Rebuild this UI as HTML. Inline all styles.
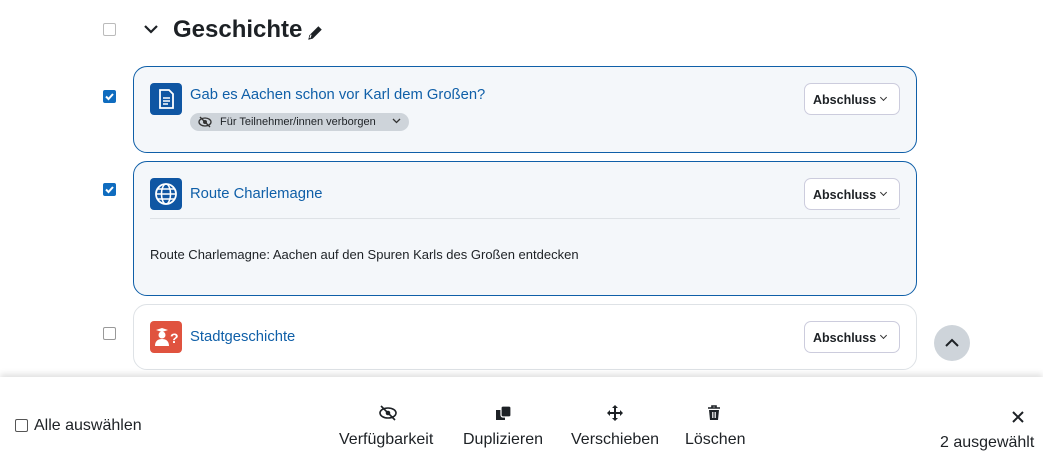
<!DOCTYPE html>
<html><head><meta charset="utf-8"><style>
*{box-sizing:border-box;margin:0;padding:0}
body{width:1043px;height:466px;overflow:hidden;background:#fff;font-family:"Liberation Sans",sans-serif;color:#1d2125;position:relative}
.a{position:absolute}
.cb{position:absolute;left:103px;width:13px;height:13px;border:1px solid #aaa;border-radius:2px;background:#fff}
.cb.on{background:#0f6cbf;border-color:#0f6cbf}
.card{position:absolute;left:133px;width:784px;border:1px solid #0f5fa8;border-radius:14px;background:#f4f7fa}
.ic{position:absolute;left:16px;width:32px;height:32px;border-radius:4px;background:#0f56a3}
.t{position:absolute;left:56px;font-size:14.8px;color:#0f5fa8}
.btn{position:absolute;left:670px;width:96px;height:32px;border:1px solid #ccd;border-radius:7px;background:#fff;font-weight:bold;font-size:12.5px;padding:9px 0 0 8px}
.btn:after{content:"";position:absolute;right:13px;top:11px;width:4px;height:4px;border-right:1.3px solid #333;border-bottom:1.3px solid #333;transform:rotate(45deg)}
</style></head><body>
<div class="cb" style="top:23px;border-color:#bbb"></div>
<svg class="a" style="left:143px;top:23px" width="16" height="12"><path d="M2 3l6 6 6-6" stroke="#1d2125" stroke-width="2.2" fill="none"/></svg>
<div class="a" style="left:173px;top:16px;font-size:24px;font-weight:bold">Geschichte</div>
<svg class="a" style="left:306px;top:24px" width="18" height="18" viewBox="0 0 16 16"><path d="M2 14l1-4 8-8 3 3-8 8z" fill="#1d2125"/><path d="M3.5 12.5l1-3" stroke="#fff" stroke-width="1"/></svg>

<div class="cb on" style="top:90px"><svg width="11" height="11" style="position:absolute;left:0;top:0"><path d="M2 5.5l2.5 2.5 4.5-5" stroke="#fff" stroke-width="2" fill="none"/></svg></div>
<div class="card" style="top:66px;height:87px">
<div class="ic" style="top:16px"><svg width="32" height="32"><path d="M10 7h9l4 4v14H10z" stroke="#fff" stroke-width="1.8" fill="none"/><path d="M13 15h7M13 18h7M13 21h5" stroke="#fff" stroke-width="1.5"/></svg></div>
<div class="t" style="top:20px">Gab es Aachen schon vor Karl dem Großen?</div>
<div class="a" style="left:56px;top:46px;width:219px;height:18px;border-radius:9px;background:#ced4da;font-size:11px;padding:3px 0 0 30px">Für Teilnehmer/innen verborgen
<svg class="a" style="left:8px;top:3px" width="14" height="12"><ellipse cx="7" cy="6" rx="6" ry="4" stroke="#333" stroke-width="1.3" fill="none"/><circle cx="7" cy="6" r="2" fill="#333"/><path d="M2 1l10 10" stroke="#333" stroke-width="1.3"/></svg>
<svg class="a" style="left:202px;top:5px" width="9" height="7"><path d="M1 1l3.5 3.5L8 1" stroke="#333" stroke-width="1.3" fill="none"/></svg></div>
<div class="btn" style="top:16px">Abschluss</div>
</div>

<div class="cb on" style="top:183px"><svg width="11" height="11" style="position:absolute;left:0;top:0"><path d="M2 5.5l2.5 2.5 4.5-5" stroke="#fff" stroke-width="2" fill="none"/></svg></div>
<div class="card" style="top:161px;height:135px">
<div class="ic" style="top:16px"><svg width="32" height="32"><circle cx="16" cy="16" r="10" stroke="#fff" stroke-width="1.8" fill="none"/><ellipse cx="16" cy="16" rx="4.5" ry="10" stroke="#fff" stroke-width="1.5" fill="none"/><path d="M6 16h20M8 11h16M8 21h16" stroke="#fff" stroke-width="1.4"/></svg></div>
<div class="t" style="top:24px">Route Charlemagne</div>
<div class="btn" style="top:16px">Abschluss</div>
<div class="a" style="left:16px;top:56px;width:750px;height:1px;background:#dee2e6"></div>
<div class="a" style="left:16px;top:85px;font-size:13px">Route Charlemagne: Aachen auf den Spuren Karls des Großen entdecken</div>
</div>

<div class="cb" style="top:327px;border-color:#999"></div>
<div class="card" style="top:304px;height:66px;background:#fff;border-color:#dee2e6">
<div class="ic" style="top:16px;background:#e0533f"><svg width="32" height="32"><circle cx="12" cy="14" r="3.5" fill="#fff"/><path d="M5 25c0-5 3-7 7-7s7 2 7 7z M6 9l6-2 6 2-6 2z" fill="#fff"/><text x="20" y="22" fill="#fff" font-size="14" font-weight="bold" font-family="Liberation Sans">?</text></svg></div>
<div class="t" style="top:24px">Stadtgeschichte</div>
<div class="btn" style="top:16px">Abschluss</div>
</div>
<div class="a" style="left:934px;top:325px;width:36px;height:36px;border-radius:50%;background:#ced4da"><svg width="36" height="36"><path d="M12 21l6-6 6 6" stroke="#1d2125" stroke-width="2" fill="none"/></svg></div>

<div class="a" style="left:0;top:377px;width:1043px;height:89px;background:#fff;box-shadow:0 -3px 6px rgba(0,0,0,.12)">
<div class="cb" style="left:15px;top:42px;border-color:#555"></div>
<div class="a" style="left:34px;top:40px;font-size:16px">Alle auswählen</div>
<svg class="a" style="left:378px;top:28px" width="20" height="16"><ellipse cx="10" cy="8" rx="8" ry="5" stroke="#1d2125" stroke-width="1.6" fill="none"/><circle cx="10" cy="8" r="2.3" fill="#1d2125"/><path d="M3 1l14 14" stroke="#1d2125" stroke-width="1.6"/></svg>
<div class="a" style="left:339px;top:54px;font-size:16px">Verfügbarkeit</div>
<svg class="a" style="left:495px;top:28px" width="18" height="16"><rect x="1" y="5" width="9" height="10" fill="#1d2125"/><rect x="6" y="1" width="10" height="11" rx="2" fill="#1d2125" stroke="#fff" stroke-width="1.2"/></svg>
<div class="a" style="left:463px;top:54px;font-size:16px">Duplizieren</div>
<svg class="a" style="left:606px;top:28px" width="18" height="16"><path d="M9 1v14M2 8h14" stroke="#1d2125" stroke-width="2"/><path d="M9 0l3 3H6zM9 16l3-3H6zM1 8l3-3v6zM17 8l-3-3v6z" fill="#1d2125"/></svg>
<div class="a" style="left:571px;top:54px;font-size:16px">Verschieben</div>
<svg class="a" style="left:707px;top:28px" width="14" height="16"><path d="M1 3h12M5 3V1h4v2" stroke="#1d2125" stroke-width="1.6" fill="none"/><path d="M2 5h10l-1 10H3z" fill="#1d2125"/><path d="M5.5 7v6M7 7v6M8.5 7v6" stroke="#fff" stroke-width=".8"/></svg>
<div class="a" style="left:685px;top:54px;font-size:16px">Löschen</div>
<svg class="a" style="left:1012px;top:34px" width="12" height="12"><path d="M1 1l10 10M11 1L1 11" stroke="#1d2125" stroke-width="2"/></svg>
<div class="a" style="left:940px;top:57px;font-size:16px">2 ausgewählt</div>
</div>
</body></html>
